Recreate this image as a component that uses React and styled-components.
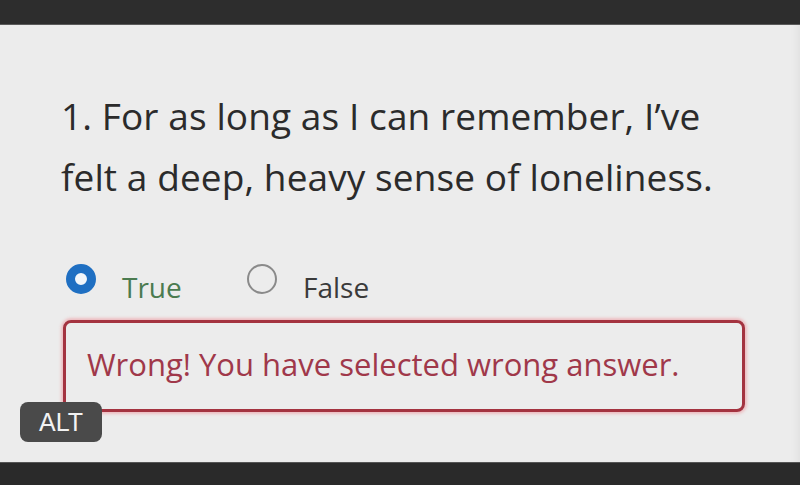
import React from "react";
import styled, { createGlobalStyle } from "styled-components";

const GlobalStyle = createGlobalStyle`
  html, body {
    margin: 0;
    padding: 0;
    background: #2c2c2c;
  }
  body {
    font-family: "Open Sans", "Noto Sans", sans-serif;
  }
`;

/* ================= FRAME ================= */

const Page = styled.div`
  width: 800px;
  height: 485px;
  display: flex;
  flex-direction: column;
  overflow: hidden;
`;

const TopBar = styled.div`
  height: 24px;
  background: #2d2d2d;
  border-bottom: 1px solid #5a5a5a;
`;

const Panel = styled.div`
  position: relative;
  flex: 1;
  background: #ececec;
  padding: 60px 40px 0 61px;
  box-shadow: inset -14px 0 10px -12px rgba(0, 0, 0, 0.06);
`;

const BottomBar = styled.div`
  height: 22px;
  background: #2a2a2a;
  border-top: 1px solid #555;
`;

/* ================= QUESTION ================= */

const Question = styled.p`
  margin: 0;
  font-size: 37px;
  line-height: 61px;
  color: #2b2b2b;
  letter-spacing: 0.1px;
`;

const Options = styled.div`
  display: flex;
  align-items: flex-start;
  margin-top: 57px;
  margin-left: 5px;
`;

const Option = styled.label`
  display: flex;
  align-items: flex-start;
  gap: 26px;
  width: 181px;
  font-size: 28px;
  line-height: 38px;
  color: ${(p) => (p.$correct ? "#4b7b50" : "#3a3a3a")};
`;

const Radio = styled.span`
  box-sizing: border-box;
  width: 30px;
  height: 30px;
  border-radius: 50%;
  flex-shrink: 0;
  border: ${(p) => (p.$checked ? "9.5px solid #1f6fc2" : "2.5px solid #8a8a8a")};
  background: ${(p) => (p.$checked ? "#f2f6fa" : "transparent")};
`;

const OptionText = styled.span`
  margin-top: 4px;
`;

/* ================= FEEDBACK ================= */

const Feedback = styled.div`
  box-sizing: border-box;
  margin-top: 14px;
  margin-left: 2px;
  width: 682px;
  height: 92px;
  border: 3px solid #a43340;
  border-radius: 8px;
  box-shadow: 0 0 3px 2px rgba(240, 130, 140, 0.45);
  display: flex;
  align-items: center;
  padding: 0 0 4px 21px;
  font-size: 31px;
  color: #a0384a;
  letter-spacing: 0;
`;

const AltBadge = styled.span`
  position: absolute;
  left: 20px;
  top: 377px;
  width: 82px;
  height: 40px;
  border-radius: 8px;
  background: #4a4a4a;
  color: #f2f2f2;
  font-family: "Liberation Sans", Arial, sans-serif;
  font-size: 25px;
  display: flex;
  align-items: center;
  justify-content: center;
`;

export default function App() {
  return (
    <>
      <GlobalStyle />
      <Page>
        <TopBar />
        <Panel>
          <Question>
            1. For as long as I can remember, I’ve
            <br />
            felt a deep, heavy sense of loneliness.
          </Question>
          <Options>
            <Option $correct>
              <Radio $checked />
              <OptionText>True</OptionText>
            </Option>
            <Option>
              <Radio />
              <OptionText>False</OptionText>
            </Option>
          </Options>
          <Feedback>Wrong! You have selected wrong answer.</Feedback>
          <AltBadge>ALT</AltBadge>
        </Panel>
        <BottomBar />
      </Page>
    </>
  );
}
